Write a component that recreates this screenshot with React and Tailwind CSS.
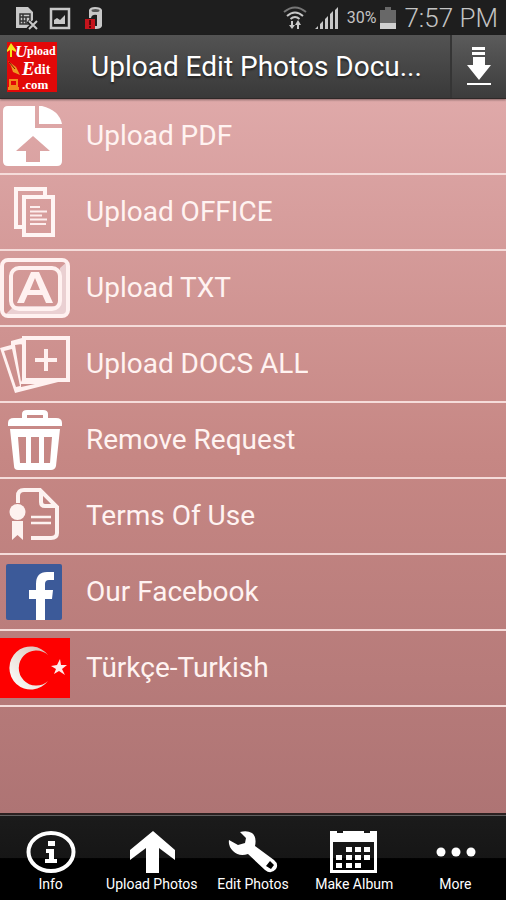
import { useState } from 'react';

// Each icon is drawn on a 70x60 canvas, the size of the icon column
const menuItems = [
  { id: 'pdf', label: 'Upload PDF', icon: PdfIcon },
  { id: 'office', label: 'Upload OFFICE', icon: OfficeIcon },
  { id: 'txt', label: 'Upload TXT', icon: TxtIcon },
  { id: 'docs', label: 'Upload DOCS ALL', icon: DocsIcon },
  { id: 'remove', label: 'Remove Request', icon: TrashIcon },
  { id: 'terms', label: 'Terms Of Use', icon: TermsIcon },
  { id: 'facebook', label: 'Our Facebook', icon: FacebookIcon },
  { id: 'turkish', label: 'Türkçe-Turkish', icon: TurkishIcon },
];

const tabs = [
  { id: 'info', label: 'Info', icon: InfoIcon },
  { id: 'upload', label: 'Upload Photos', icon: ArrowIcon },
  { id: 'edit', label: 'Edit Photos', icon: WrenchIcon },
  { id: 'album', label: 'Make Album', icon: CalendarIcon },
  { id: 'more', label: 'More', icon: MoreIcon },
];

function RowSvg({ children }) {
  return (
    <svg className="h-[60px] w-[70px] shrink-0" viewBox="0 0 70 60" fill="none" aria-hidden="true">
      {children}
    </svg>
  );
}

function PdfIcon() {
  return (
    <RowSvg>
      <path
        fill="#fff"
        fillRule="evenodd"
        d="M8 0H35V22H62V55Q62 60 57 60H8Q3 60 3 55V5Q3 0 8 0ZM33 30L16 45H26V56H40V45H50Z"
      />
      <path fill="#fff" d="M39 0H42Q59 4 62 18H39Z" />
    </RowSvg>
  );
}

function OfficeIcon() {
  return (
    <RowSvg>
      <path stroke="#fff5f4" strokeWidth="4" d="M45 14V7H16V45H22" />
      <rect x="24" y="15" width="29" height="38" stroke="#fff5f4" strokeWidth="4" />
      <path
        stroke="#fdeeee"
        strokeWidth="2"
        d="M30 25H40M30 29.500H47M30 33.500H42M30 37.500H47M30 42H46"
      />
    </RowSvg>
  );
}

function TxtIcon() {
  return (
    <RowSvg>
      <path fill="#ead0d2" d="M68 3V53Q68 58 63 58H4L14 48H54Q60 48 60 42V10Z" />
      <rect x="2" y="2" width="66" height="56" rx="6" stroke="#fff1f0" strokeWidth="4" />
      <rect x="11" y="10" width="49" height="41" rx="8" stroke="#fff1f0" strokeWidth="4" />
      <path
        fill="#fff1f0"
        fillRule="evenodd"
        d="M31 14H39L53 45H46L42.500 37H27.500L24 45H17ZM35 20L30 32H40Z"
      />
    </RowSvg>
  );
}

function DocsIcon() {
  return (
    <RowSvg>
      <path
        fill="#fff1f0"
        fillRule="evenodd"
        d="M0 14L11 11V7L22 4V46H66L15 59ZM4 17L16 53L20 52L12 15ZM15 11L21 48L22 46V10ZM21 50V53L35 50Z"
      />
      <rect x="24" y="4" width="44" height="42" stroke="#fff1f0" strokeWidth="4" />
      <path stroke="#fff1f0" strokeWidth="4" d="M46 15V37M35 26H57" />
    </RowSvg>
  );
}

function TrashIcon() {
  return (
    <RowSvg>
      <path
        fill="#fff"
        fillRule="evenodd"
        d="M8 16V13Q8 8 14 8H22V4Q22 0 27 0H43Q48 0 48 4V8H56Q62 8 62 13V16ZM27 8H43V5H27Z"
      />
      <path
        fill="#fff"
        fillRule="evenodd"
        d="M10 19H60L56 56Q55 60 51 60H18Q14 60 14 56ZM18 27L20 53H26V27ZM31 27V53H39V27ZM44 27V53H50L52 27Z"
      />
    </RowSvg>
  );
}

function TermsIcon() {
  return (
    <RowSvg>
      <path stroke="#fdf2f0" strokeWidth="4" d="M18 17V10Q18 4 24 4H40L57 21V47Q57 52 51 52H31" />
      <path stroke="#fdf2f0" strokeWidth="4" d="M41 5V16Q41 20 45 20H56" />
      <path stroke="#fdf2f0" strokeWidth="2.500" d="M31 31H51M31 37H51" />
      <circle cx="17.500" cy="26" r="8" fill="#fdf2f0" />
      <path fill="#fdf2f0" d="M12 35H23V54L17.500 49L12 54Z" />
    </RowSvg>
  );
}

function FacebookIcon() {
  return (
    <RowSvg>
      <rect x="6" y="2" width="56" height="56" rx="2" fill="#3c5a99" />
      <path
        fill="#fff"
        d="M36 58V37H29V28H36V22Q36 10 47 10H54V18H49Q45 18 45 22V28H53L52 37H45V58Z"
      />
    </RowSvg>
  );
}

function TurkishIcon() {
  return (
    <RowSvg>
      <defs>
        <linearGradient id="crescent" x1="0" x2="1" y1="1" y2="0">
          <stop offset="0" stopColor="#fff" />
          <stop offset="0.500" stopColor="#eae2da" />
          <stop offset="1" stopColor="#d8b8b0" />
        </linearGradient>
      </defs>
      <rect width="70" height="60" fill="#fe0000" />
      <path fill="url(#crescent)" d="M48 17A21.500 21.500 0 1 0 48 43A17.500 17.500 0 1 1 48 17Z" />
      <path fill="#ffeae8" d="M60 21L61 27L67 27L62 31L65 37L59 33L54 36L56 31L51 28L57 27Z" />
    </RowSvg>
  );
}

function TabSvg({ children }) {
  return (
    <svg className="h-[44px] w-[50px]" viewBox="0 0 50 44" fill="none" aria-hidden="true">
      {children}
    </svg>
  );
}

function InfoIcon() {
  return (
    <TabSvg>
      <ellipse cx="25" cy="22" rx="22.500" ry="19" stroke="#fff" strokeWidth="4" />
      <path fill="#fff" d="M22 11H29V16H22ZM20 19H28V29H31V33H19V29H23V23H20Z" />
    </TabSvg>
  );
}

function ArrowIcon() {
  return (
    <TabSvg>
      <path fill="#fff" d="M26 1L48 20V30L32 18V43H19V18L3 30V20Z" />
    </TabSvg>
  );
}

function WrenchIcon() {
  return (
    <TabSvg>
      <path
        fill="#fff"
        fillRule="evenodd"
        d="M12 2Q19 0 24 3Q29 7 27 16L46 30Q51 34 48 39Q43 45 37 40L20 24Q11 27 5 21Q0 16 1 10L10 15L17 13L18 8ZM42 31L38 36L43 39L46 35Z"
      />
    </TabSvg>
  );
}

function CalendarIcon() {
  return (
    <TabSvg>
      <path
        fill="#fff"
        fillRule="evenodd"
        d="M1 1H8V3H14V1H35V3H41V1H48V43H1ZM4 12V40H45V12Z"
      />
      <path
        fill="#fff"
        d="M17 17H23V22H17ZM26 17H32V22H26ZM35 17H41V22H35ZM7 25H13V30H7ZM17 25H23V30H17ZM26 25H32V30H26ZM35 25H41V30H35ZM7 33H13V38H7ZM17 33H23V38H17ZM26 33H32V38H26Z"
      />
    </TabSvg>
  );
}

function MoreIcon() {
  return (
    <TabSvg>
      <circle cx="11" cy="22" r="4.500" fill="#fff" />
      <circle cx="26" cy="22" r="4.500" fill="#fff" />
      <circle cx="41" cy="22" r="4.500" fill="#fff" />
    </TabSvg>
  );
}

function StatusBar() {
  return (
    <div className="flex h-[35px] items-center justify-between bg-[#1e1e1e] pr-2 pl-4 text-[#c4c4c4]">
      <svg className="h-6 w-[88px]" viewBox="0 0 88 24" fill="none" aria-hidden="true">
        <path fill="#c8c8c8" d="M0 1H12L17 6V14L14 17L17 20V22H0Z" />
        <path stroke="#333" strokeWidth="1.500" d="M4 8H14V18H4ZM4 11H14M7 8V18M10 11V18M4 15H10" />
        <path stroke="#1e1e1e" strokeWidth="4" d="M12 15L21 23M21 15L12 23" />
        <path stroke="#c8c8c8" strokeWidth="2" d="M13 15L21 23M21 15L13 23" />
        <rect x="35" y="3" width="18" height="19" stroke="#c8c8c8" strokeWidth="2.500" />
        <path fill="#c8c8c8" d="M38 18V14L41 12L44 14L49 9V18Z" />
        <path fill="#c8c8c8" d="M73 4Q74 1 79 1Q85 1 86 4V20Q85 23 80 23H78V20H81V9Q76 8 75 12H73Z" />
        <ellipse cx="79.500" cy="4.500" rx="4" ry="1.500" fill="#555" />
        <rect x="69" y="13" width="10" height="10" fill="#c4141c" />
        <path stroke="#58080b" strokeWidth="2" d="M74 14V19M74 20V22" />
      </svg>
      <div className="flex items-center gap-1">
        <svg className="h-6 w-[24px]" viewBox="0 0 24 24" fill="none" aria-hidden="true">
          <path stroke="#777" strokeWidth="2" d="M1 6Q12 -3 23 6" />
          <path stroke="#c8c8c8" strokeWidth="2" d="M4 10Q12 3 20 10M7.500 13Q12 9 16.500 13" />
          <path fill="#c8c8c8" d="M8 15H10V19H12L9 23L6 19H8ZM14 23V19H12L15 14L18 19H16V23Z" />
        </svg>
        <svg className="ml-1 h-6 w-[24px]" viewBox="0 0 24 24" aria-hidden="true">
          <path
            fill="#c8c8c8"
            d="M0 23L3 20V23ZM5 23V18L8 15V23ZM10 23V13L13 10V23ZM15 23V8L18 5V23ZM20 23V4L23 1V23Z"
          />
        </svg>
        <span className="ml-1 text-base">30%</span>
        <svg className="h-6 w-[16px]" viewBox="0 0 16 24" aria-hidden="true">
          <path fill="#686868" d="M0 4H5V1H11V4H16V23H0Z" />
          <rect y="17" width="16" height="6" fill="#d0d0d0" />
        </svg>
        <span className="ml-1 text-[26px] leading-8 font-light">7:57 PM</span>
      </div>
    </div>
  );
}

function Logo() {
  return (
    <svg className="h-[50px] w-[50px] shrink-0" viewBox="0 0 50 50" role="img" aria-label="Upload Edit .com">
      <rect width="50" height="50" fill="#e20808" />
      <path fill="#f5e21a" d="M4 1L9 8V10L5 8V15H3V8L0 10V8Z" />
      <path fill="#ee9a22" d="M1 19L5 22L9 25L13 33L6 30L4 24Z" />
      <path stroke="#7c1206" d="M2 20L8 27" />
      <path fill="#f28a1c" fillRule="evenodd" d="M2 37H11V45H12V48H1V45H2ZM4 39V43H9V39Z" />
      <g fill="#fff" fontFamily="'Liberation Serif', serif" fontWeight="bold">
        <text x="8" y="15" fontSize="17" fontStyle="italic">U</text>
        <text x="20" y="13" fontSize="12">pload</text>
        <text x="15" y="33" fontSize="19" fontStyle="italic">E</text>
        <text x="27" y="32" fontSize="14">dit</text>
        <text x="15" y="47" fontSize="13">.com</text>
      </g>
    </svg>
  );
}

function Header() {
  return (
    <header className="relative flex h-16 items-stretch border-b border-[#2f2928] bg-linear-to-b from-[#535353] to-[#393939] shadow-[0_1px_2px_#0006]">
      <div className="flex min-w-0 flex-1 items-center gap-[34px] pl-[7px]">
        <Logo />
        <h1 className="min-w-0 truncate text-[28px] leading-10 text-white [text-shadow:0_2px_2px_#222]">
          Upload Edit Photos Docu...
        </h1>
      </div>
      <button
        type="button"
        aria-label="Download"
        className="flex w-14 shrink-0 items-center justify-center border-l-2 border-[#353535] bg-linear-to-b from-[#5b5b5b] to-[#3c3c3c]"
      >
        <svg className="h-10 w-6" viewBox="0 0 24 40" fill="#fff" aria-hidden="true">
          <path d="M5 0H18V3H5ZM5 5H18V8H5ZM6 10H18V18H24L12 33L0 18H6ZM0 36H24V38H0Z" />
        </svg>
      </button>
    </header>
  );
}

export default function App() {
  const [activeTab, setActiveTab] = useState('more');

  return (
    <div className="flex min-h-screen flex-col bg-black font-[Roboto,sans-serif]">
      <StatusBar />
      <Header />

      <main className="flex-1 bg-linear-to-b from-[#dfa9a9] via-[#c68784] to-[#ae7474]">
        <ul>
          {menuItems.map(({ id, label, icon: Icon }) => (
            <li key={id} className="border-b-2 border-[#f5dcda]">
              <button type="button" className="flex h-[74px] w-full items-center gap-4 text-left">
                <Icon />
                <span className="truncate text-[28px] text-[#fff3f1]">{label}</span>
              </button>
            </li>
          ))}
        </ul>
      </main>

      <nav className="flex h-[87px] border-t-2 border-[#2b2020] bg-linear-to-b from-[#1b1b1b] from-0% via-[#161616] via-50% to-black to-52%">
        {tabs.map(({ id, label, icon: Icon }) => (
          <button
            key={id}
            type="button"
            aria-current={activeTab === id ? 'page' : undefined}
            onClick={() => setActiveTab(id)}
            className="flex min-w-0 flex-1 flex-col items-center border-t border-[#606060] pt-[14px] text-sm text-white"
          >
            <Icon />
            <span className="whitespace-nowrap">{label}</span>
          </button>
        ))}
      </nav>
    </div>
  );
}
